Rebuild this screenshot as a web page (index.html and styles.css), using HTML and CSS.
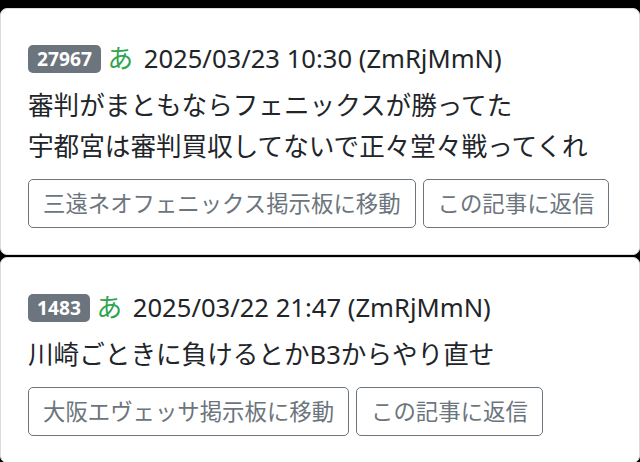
FILE: index.html
```html
<!DOCTYPE html>
<html lang="ja">
<head>
<meta charset="utf-8">
<link rel="stylesheet" href="styles.css">
</head>
<body>
<div class="list">
  <div class="card">
    <div class="head"><span class="badge">27967</span> <span class="kana">あ</span> <span class="date">2025/03/23 10:30 (ZmRjMmN)</span></div>
    <div class="body">審判がまともならフェニックスが勝ってた<br>宇都宮は審判買収してないで正々堂々戦ってくれ</div>
    <div class="actions">
      <a class="btn">三遠ネオフェニックス掲示板に移動</a>
      <a class="btn">この記事に返信</a>
    </div>
  </div>
  <div class="card">
    <div class="head"><span class="badge">1483</span> <span class="kana">あ</span> <span class="date">2025/03/22 21:47 (ZmRjMmN)</span></div>
    <div class="body">川崎ごときに負けるとかB3からやり直せ</div>
    <div class="actions">
      <a class="btn">大阪エヴェッサ掲示板に移動</a>
      <a class="btn">この記事に返信</a>
    </div>
  </div>
</div>
</body>
</html>
```
FILE: styles.css
```css
html, body {
  margin: 0;
  padding: 0;
  background: #000;
}
body {
  font-family: "Noto Sans", "Noto Sans CJK JP", sans-serif;
  color: #212529;
  width: 640px;
  height: 462px;
  overflow: hidden;
}
.list {
  padding-top: 8px;
  display: flex;
  flex-direction: column;
  gap: 2px;
}
.card {
  background: #fff;
  border: 1px solid #dcdcdc;
  border-radius: 7px;
  padding: 26px 26px 26px 27px;
}
.head {
  font-size: 25.6px;
  line-height: 48px;
  height: 48px;
  white-space: nowrap;
}
.badge {
  display: inline-block;
  background: #6c757d;
  color: #fff;
  font-weight: 700;
  font-size: 19.2px;
  line-height: 1;
  padding: 4px 9px 5px;
  border-radius: 5px;
  vertical-align: 2px;
}
.kana {
  color: #2ea44f;
}
.date {
  margin-left: 4px;
}
.body {
  font-size: 25.6px;
  line-height: 41px;
  margin-top: 2px;
}
.actions {
  display: flex;
  gap: 7px;
  margin-top: 12px;
}
.btn {
  display: inline-block;
  border: 1.5px solid #6c757d;
  border-radius: 5px;
  color: #6c757d;
  font-size: 22.4px;
  line-height: 35px;
  padding: 6px 14px;
  white-space: nowrap;
}
```
